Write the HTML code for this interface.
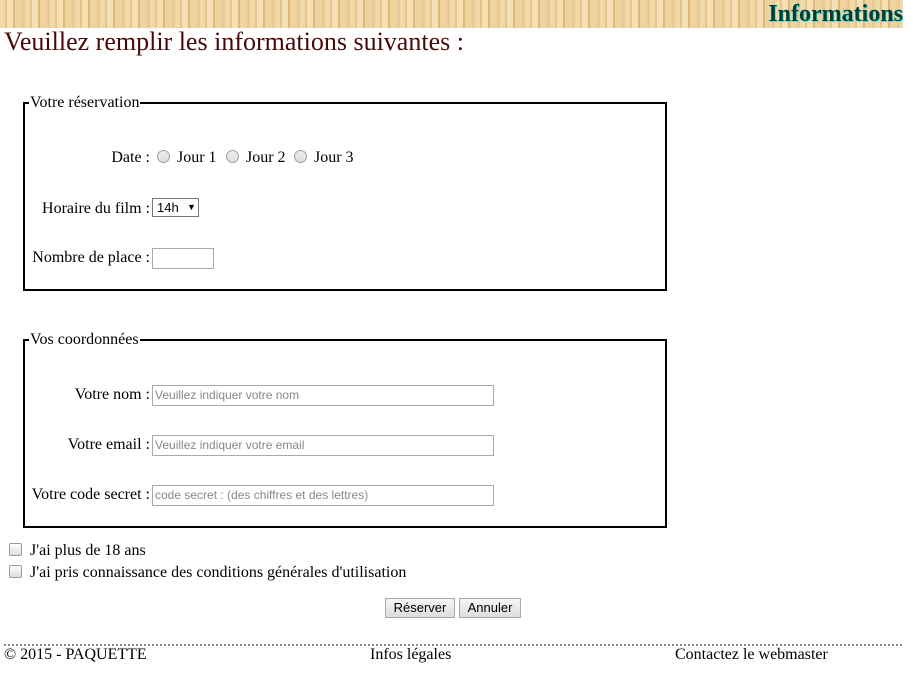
<!DOCTYPE html>
<html><head><meta charset="utf-8"><style>
body{margin:0;width:916px;height:676px;position:relative;font-family:"Liberation Serif",serif;font-size:16px;color:#000;background:#fff;overflow:hidden}
.a{position:absolute;white-space:nowrap}
.banner{left:0;top:0;width:903px;height:28px;background:repeating-linear-gradient(90deg,#f1d9a8 0 5px,#e7c48a 5px 7px,#f5e0b6 7px 13px,#dfb878 13px 15px,#efd39e 15px 22px,#e9c996 22px 25px);}
.fs{border:2px solid #000;left:23px;width:640px;height:185px}
.lg{background:#fff;padding:0 1px}
.r{width:150px;text-align:right}
.rad{width:11px;height:11px;border:1px solid #a0a0a0;border-radius:50%;background:linear-gradient(#eee,#ddd)}
.txt{height:21px;border:1px solid #a9a9a9;box-sizing:border-box;font-family:"Liberation Sans",sans-serif;font-size:12px;color:#888;padding:2px 2px;line-height:15px}
.cb{width:11px;height:11px;border:1px solid #999;border-radius:2px;background:linear-gradient(#fff,#ddd)}
.btn{height:20px;border:1px solid #aaa;background:linear-gradient(#f6f6f6,#ddd);font-family:"Liberation Sans",sans-serif;font-size:13px;line-height:18px;box-sizing:border-box;text-align:center}
</style></head><body>
<div class="a banner"></div>
<div class="a" style="right:13px;top:1px;font-size:24px;font-weight:bold;text-shadow:1px 1px 0 #3ee;color:#0a3a33">Informations</div>
<div class="a" style="left:4px;top:27px;font-size:26px;color:#4a0808">Veuillez remplir les informations suivantes :</div>

<div class="a fs" style="top:102px"></div>
<div class="a lg" style="left:29px;top:94px">Votre réservation</div>
<div class="a r" style="left:0;top:149px">Date :</div>
<div class="a rad" style="left:157px;top:150px"></div><div class="a" style="left:177px;top:149px">Jour 1</div>
<div class="a rad" style="left:226px;top:150px"></div><div class="a" style="left:246px;top:149px">Jour 2</div>
<div class="a rad" style="left:294px;top:150px"></div><div class="a" style="left:314px;top:149px">Jour 3</div>
<div class="a r" style="left:0;top:200px">Horaire du film :</div>
<div class="a" style="left:152px;top:198px;width:47px;height:19px;border:1px solid #777;box-sizing:border-box;font-family:'Liberation Sans',sans-serif;font-size:13px;line-height:17px;padding-left:4px">14h <span style="font-size:9px;position:absolute;left:34px">▼</span></div>
<div class="a r" style="left:0;top:249px">Nombre de place :</div>
<div class="a txt" style="left:152px;top:248px;width:62px"></div>

<div class="a fs" style="top:339px"></div>
<div class="a lg" style="left:29px;top:331px">Vos coordonnées</div>
<div class="a r" style="left:0;top:386px">Votre nom :</div>
<div class="a txt" style="left:152px;top:385px;width:342px">Veuillez indiquer votre nom</div>
<div class="a r" style="left:0;top:436px">Votre email :</div>
<div class="a txt" style="left:152px;top:435px;width:342px">Veuillez indiquer votre email</div>
<div class="a r" style="left:0;top:486px">Votre code secret :</div>
<div class="a txt" style="left:152px;top:485px;width:342px">code secret : (des chiffres et des lettres)</div>

<div class="a cb" style="left:9px;top:543px"></div><div class="a" style="left:30px;top:542px">J'ai plus de 18 ans</div>
<div class="a cb" style="left:9px;top:565px"></div><div class="a" style="left:30px;top:564px">J'ai pris connaissance des conditions générales d'utilisation</div>
<div class="a btn" style="left:385px;top:598px;width:70px">Réserver</div>
<div class="a btn" style="left:459px;top:598px;width:62px">Annuler</div>

<div class="a" style="left:4px;top:644px;width:898px;border-top:2px dotted #888"></div>
<div class="a" style="left:4px;top:646px">© 2015 - PAQUETTE</div>
<div class="a" style="left:370px;top:646px">Infos légales</div>
<div class="a" style="left:675px;top:646px">Contactez le webmaster</div>
</body></html>
